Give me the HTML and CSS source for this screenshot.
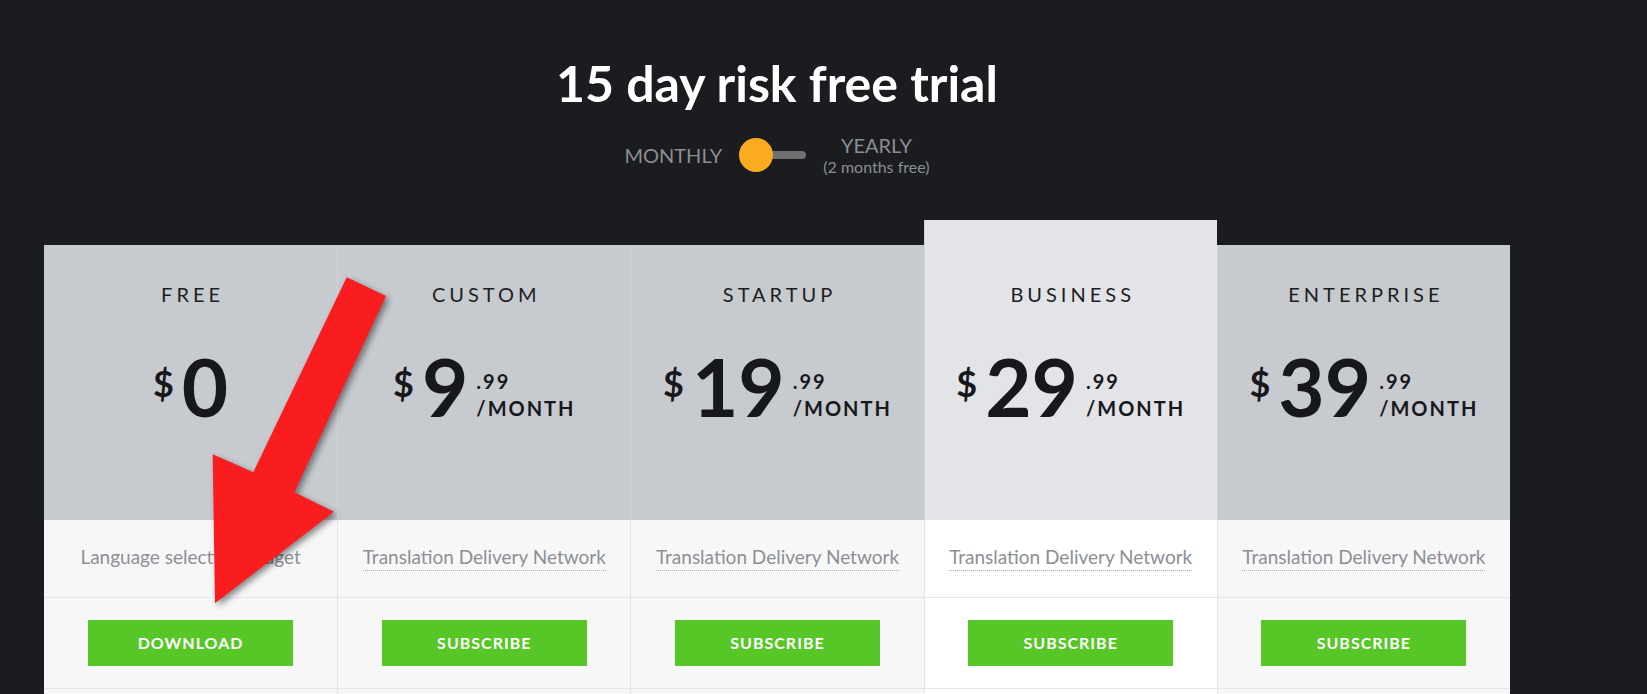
FILE: index.html
```html
<!DOCTYPE html>
<html lang="en">
<head>
    <meta charset="UTF-8">
    <meta name="viewport" content="width=device-width, initial-scale=1.0">
    <title>Pricing</title>
    <link rel="stylesheet" href="styles.css">
</head>
<body>

    <div class="page">
        <h1 class="title">15 day risk free trial</h1>

        <div class="billing">
            <span class="billing-label">MONTHLY</span>
            <span class="switch"><span class="knob"></span></span>
            <span class="billing-yearly">YEARLY<small>(2 months free)</small></span>
        </div>

        <div class="plans">
            <div class="plan">
                <div class="plan-head">
                    <h3 class="plan-name">FREE</h3>
                    <div class="price">
                        <span class="currency">$</span>
                        <span class="amount">0</span>
                    </div>
                </div>
                <div class="plan-row feature"><span class="feature-text plain">Language selection widget</span></div>
                <div class="plan-row action"><a class="btn" href="#">DOWNLOAD</a></div>
                <div class="plan-row more"></div>
            </div>

            <div class="plan">
                <div class="plan-head">
                    <h3 class="plan-name">CUSTOM</h3>
                    <div class="price">
                        <span class="currency">$</span>
                        <span class="amount">9</span>
                        <span class="cents">.99<span>/MONTH</span></span>
                    </div>
                </div>
                <div class="plan-row feature"><span class="feature-text">Translation Delivery Network</span></div>
                <div class="plan-row action"><a class="btn" href="#">SUBSCRIBE</a></div>
                <div class="plan-row more"></div>
            </div>

            <div class="plan">
                <div class="plan-head">
                    <h3 class="plan-name">STARTUP</h3>
                    <div class="price">
                        <span class="currency">$</span>
                        <span class="amount">19</span>
                        <span class="cents">.99<span>/MONTH</span></span>
                    </div>
                </div>
                <div class="plan-row feature"><span class="feature-text">Translation Delivery Network</span></div>
                <div class="plan-row action"><a class="btn" href="#">SUBSCRIBE</a></div>
                <div class="plan-row more"></div>
            </div>

            <div class="plan featured">
                <div class="plan-head">
                    <h3 class="plan-name">BUSINESS</h3>
                    <div class="price">
                        <span class="currency">$</span>
                        <span class="amount">29</span>
                        <span class="cents">.99<span>/MONTH</span></span>
                    </div>
                </div>
                <div class="plan-row feature"><span class="feature-text">Translation Delivery Network</span></div>
                <div class="plan-row action"><a class="btn" href="#">SUBSCRIBE</a></div>
                <div class="plan-row more"></div>
            </div>

            <div class="plan">
                <div class="plan-head">
                    <h3 class="plan-name">ENTERPRISE</h3>
                    <div class="price">
                        <span class="currency">$</span>
                        <span class="amount">39</span>
                        <span class="cents">.99<span>/MONTH</span></span>
                    </div>
                </div>
                <div class="plan-row feature"><span class="feature-text">Translation Delivery Network</span></div>
                <div class="plan-row action"><a class="btn" href="#">SUBSCRIBE</a></div>
                <div class="plan-row more"></div>
            </div>
        </div>
    </div>

    <!-- red arrow drawn on top of the screenshot -->
    <svg class="annotation" viewBox="0 0 1647 694" width="1647" height="694">
        <polygon points="346.7,277.3 386,296 294.3,492.3 334,511.7 215,603.3 212.7,454.3 253.3,472.3" fill="#f91d1f"/>
    </svg>

</body>
</html>
```

FILE: styles.css
```css
* {
    box-sizing: border-box;
}
html, body {
    margin: 0;
    overflow: hidden;
}
body {
    background: #1b1c20;
    font-family: Lato, "Open Sans", sans-serif;
    position: relative;
    min-height: 694px;
}
.page {
    width: 1466px;
    margin-left: 44px;
    padding-top: 54px;
}
.title {
    margin: 0;
    text-align: center;
    color: #fff;
    font-size: 50px;
    line-height: 58px;
    font-weight: 700;
}

/* monthly / yearly toggle */
.billing {
    display: flex;
    justify-content: center;
    align-items: center;
    gap: 17px;
    margin-top: 21px;
    color: #8b8e94;
    font-size: 20px;
    line-height: 24px;
}
.switch {
    position: relative;
    width: 67px;
    height: 34px;
}
.switch::before {
    content: "";
    position: absolute;
    left: 17px;
    right: 0;
    top: 13px;
    height: 8px;
    border-radius: 4px;
    background: #707070;
}
.knob {
    position: absolute;
    left: 0;
    top: 0;
    width: 34px;
    height: 34px;
    border-radius: 50%;
    background: #fbab1f;
}
.billing-yearly {
    display: flex;
    flex-direction: column;
    align-items: center;
}
.billing-yearly small {
    font-size: 16px;
    line-height: 20px;
}

/* pricing table */
.plans {
    display: grid;
    grid-template-columns: repeat(5, 1fr);
    margin-top: 43px;
}
.plan {
    display: flex;
    flex-direction: column;
    margin-top: 25px;
    text-align: center;
}
.plan.featured {
    margin-top: 0;
}
.plan-head {
    height: 275px;
    padding-top: 37px;
    background: #c7cacf;
}
.plan + .plan .plan-head {
    border-left: 1px solid #d2d5d9;
}
.featured .plan-head {
    height: 300px;
    padding-top: 62px;
    background: #e2e4e8;
}
.plan-name {
    margin: 0;
    padding-left: 4px;
    font-size: 20px;
    line-height: 24px;
    font-weight: 400;
    letter-spacing: 4px;
    color: #1d1e22;
}
.price {
    display: flex;
    justify-content: center;
    margin-top: 40px;
    color: #17181c;
    font-weight: 700;
}
.currency {
    font-size: 36px;
    line-height: 36px;
    margin-top: 19px;
    margin-right: 8px;
}
.amount {
    font-size: 80px;
    line-height: 80px;
}
.cents {
    display: flex;
    flex-direction: column;
    align-items: flex-start;
    margin-top: 22px;
    margin-left: 8px;
    font-size: 20px;
    line-height: 27px;
    letter-spacing: 2px;
}

.plan-row {
    background: #f7f7f7;
    border-bottom: 1px solid #e5e5e5;
}
.plan + .plan .plan-row {
    border-left: 1px solid #e5e5e5;
}
.featured .plan-row {
    background: #fff;
}
.feature {
    height: 78px;
    display: flex;
    justify-content: center;
    align-items: center;
}
.feature-text {
    font-size: 19px;
    line-height: 22px;
    padding-bottom: 2px;
    color: #8c9096;
    border-bottom: 1px dotted #a9acb1;
}
.feature-text.plain {
    border-bottom-color: transparent;
}
.action {
    height: 91px;
    padding-top: 22px;
}
.btn {
    display: inline-block;
    width: 205px;
    height: 46px;
    line-height: 46px;
    background: #57c627;
    color: #fff;
    font-size: 16px;
    font-weight: 700;
    letter-spacing: 1px;
    text-decoration: none;
}
.more {
    height: 20px;
    border-bottom: none;
}

.annotation {
    position: absolute;
    left: 0;
    top: 0;
    pointer-events: none;
    filter: drop-shadow(3px 3px 3px rgba(0, 0, 0, 0.45));
}
```
